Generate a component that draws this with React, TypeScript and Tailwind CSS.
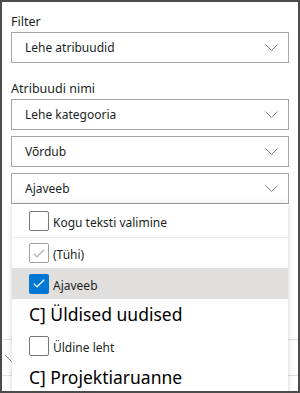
import React from 'react';

const Chevron = () => (
  <svg width="13" height="7" viewBox="0 0 13 7" fill="none" className="shrink-0">
    <path d="M0.5 0.5 L6.5 6.5 L12.5 0.5" stroke="#807e7c" strokeWidth="1" />
  </svg>
);

const Select = ({ value, className = '' }: { value: string; className?: string }) => (
  <div
    className={`flex h-[31px] items-center justify-between border border-[#a8a6a4] bg-white pl-[13px] pr-[10px] text-[12px] text-[#201f1e] ${className}`}
  >
    <span className="pt-[1px]">{value}</span>
    <Chevron />
  </div>
);

type BoxKind = 'empty' | 'dim' | 'checked';

const Box = ({ kind }: { kind: BoxKind }) => {
  if (kind === 'checked') {
    return (
      <span className="flex h-[20px] w-[20px] shrink-0 items-center justify-center rounded-[2px] bg-[#0078d4]">
        <svg width="12" height="9" viewBox="0 0 12 9" fill="none">
          <path d="M0.8 4.6 L4 7.8 L11.2 0.8" stroke="#fff" strokeWidth="1.2" />
        </svg>
      </span>
    );
  }
  return (
    <span
      className={`flex h-[20px] w-[20px] shrink-0 items-center justify-center rounded-[2px] border bg-white ${
        kind === 'dim' ? 'border-[#a19f9d]' : 'border-[#7a7876]'
      }`}
    >
      {kind === 'dim' && (
        <svg width="12" height="9" viewBox="0 0 12 9" fill="none">
          <path d="M0.8 4.6 L4 7.8 L11.2 0.8" stroke="#b3b0ad" strokeWidth="1.2" />
        </svg>
      )}
    </span>
  );
};

const CheckRow = ({ label, kind, className = '' }: { label: string; kind: BoxKind; className?: string }) => (
  <div className={`flex items-center gap-[4px] pl-[17px] ${className}`}>
    <Box kind={kind} />
    <span className="pt-[4px] text-[12px] text-[#201f1e]">{label}</span>
  </div>
);

export default function App() {
  return (
    <div
      className="relative h-[393px] w-[300px] overflow-hidden border-2 border-[#4b4b4b] bg-white"
      style={{ fontFamily: '"Segoe UI", "Noto Sans", sans-serif' }}
    >
      <div className="px-[9px] pt-[10px]">
        <div className="h-[20px] text-[12.5px] leading-[20px] text-[#201f1e]">Filter</div>
        <Select value="Lehe atribuudid" />

        <div className="mt-[16px] h-[20px] text-[12.5px] leading-[20px] text-[#201f1e]">Atribuudi nimi</div>
        <Select value="Lehe kategooria" />
        <Select value="Võrdub" className="mt-[6px]" />
        <Select value="Ajaveeb" className="mt-[6px]" />
      </div>

      {/* rows behind the open menu */}
      <div className="mt-[135px] h-[37px] border-y border-[#e1dfdd] pl-[3px] pt-[15px]">
        <Chevron />
      </div>

      {/* open dropdown list */}
      <div className="absolute left-[10px] top-[202px] w-[276px] bg-white shadow-[0_0_6px_rgba(0,0,0,0.18)]">
        <CheckRow label="Kogu teksti valimine" kind="empty" className="h-[34px] border-b border-[#edebe9]" />
        <CheckRow label="(Tühi)" kind="dim" className="h-[30px]" />
        <CheckRow label="Ajaveeb" kind="checked" className="h-[31px] bg-[#e1dfdd]" />
        <div className="flex h-[31px] items-center pl-[17px] text-[17.5px] text-black">C] Üldised uudised</div>
        <CheckRow label="Üldine leht" kind="empty" className="h-[32px]" />
        <div className="flex h-[31px] items-center pl-[17px] text-[17.5px] text-black">C] Projektiaruanne</div>
      </div>
    </div>
  );
}
